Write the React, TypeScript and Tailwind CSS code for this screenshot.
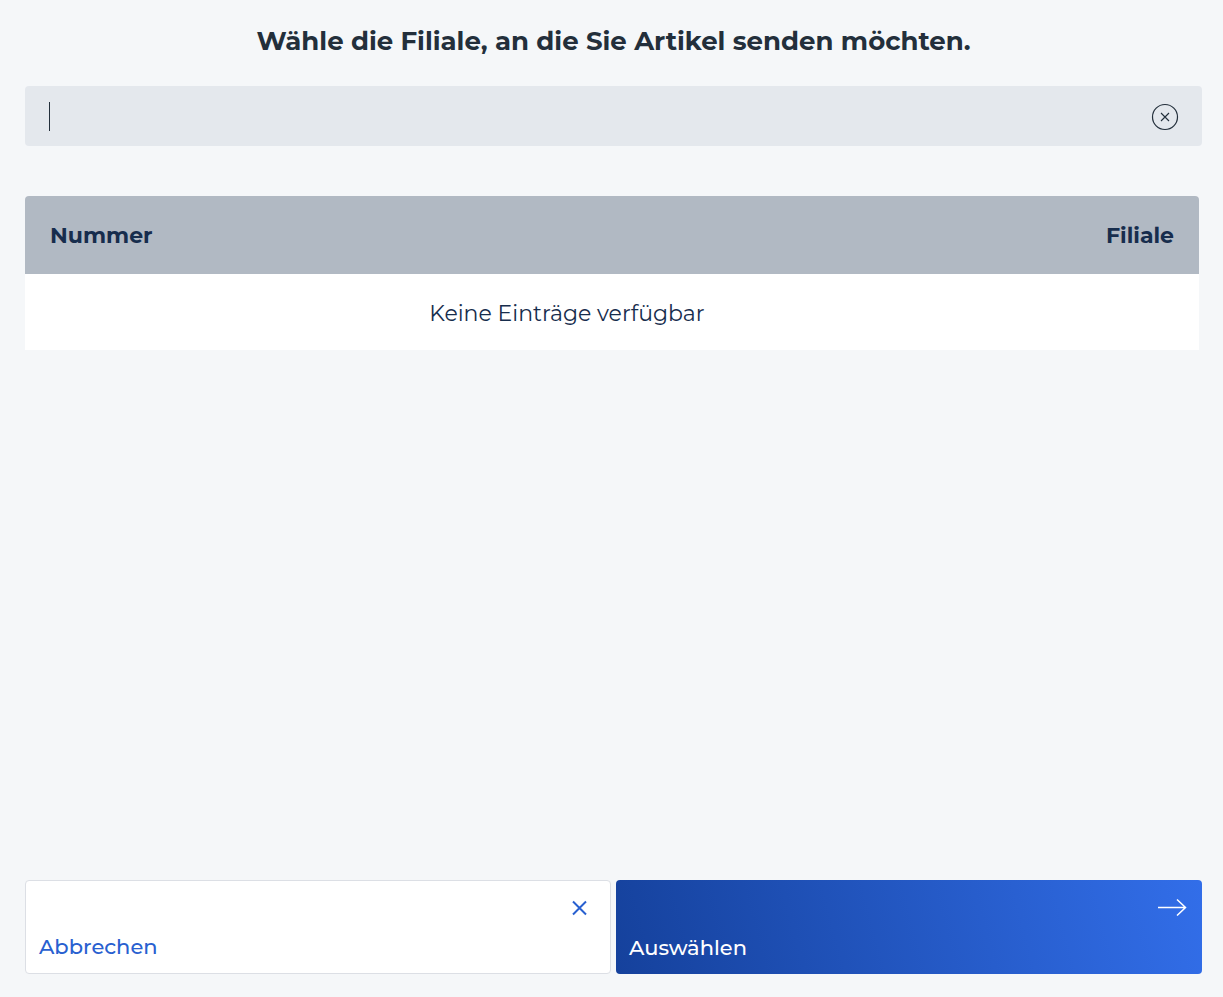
import { useState } from "react";

function ClearIcon() {
  return (
    <svg width="28" height="28" viewBox="0 0 28 28" fill="none" stroke="currentColor" aria-hidden="true">
      <circle cx="14" cy="14" r="12.5" strokeWidth="1.2" />
      <path d="M10 10l8 8M18 10l-8 8" strokeWidth="1.1" />
    </svg>
  );
}

function CloseIcon() {
  return (
    <svg width="16" height="16" viewBox="0 0 16 16" fill="none" stroke="currentColor" strokeWidth="2" aria-hidden="true">
      <path d="M1 1.5l13 13M14 1.5l-13 13" />
    </svg>
  );
}

function ArrowIcon() {
  return (
    <svg width="30" height="18" viewBox="0 0 30 18" fill="none" stroke="currentColor" strokeWidth="1.5" aria-hidden="true">
      <path d="M1 9.5h27.5M20 1.5l8.5 8-8.5 8" />
    </svg>
  );
}

export default function App() {
  const [query, setQuery] = useState("");

  return (
    <div className="flex min-h-screen flex-col bg-[#f5f7f9] pt-[21px] pr-[21px] pb-[23px] pl-[25px] font-['Montserrat','Inter',sans-serif] text-[#232f3b]">
      <h1 className="text-center text-[26px] leading-10 font-bold">
        Wähle die Filiale, an die Sie Artikel senden möchten.
      </h1>

      <div className="mt-[25px] flex h-[60px] items-center rounded bg-[#e4e8ed] pr-[23px] pl-6">
        {query === "" && <span className="h-[29px] w-px bg-[#232f3b]" />}
        <input
          type="text"
          aria-label="Filiale suchen"
          value={query}
          onChange={(e) => setQuery(e.target.value)}
          className="min-w-0 flex-1 bg-transparent text-[22px] outline-none"
        />
        <button type="button" aria-label="Suche löschen" onClick={() => setQuery("")} className="mt-0.5">
          <ClearIcon />
        </button>
      </div>

      <div className="mt-[50px] mr-[3px] overflow-hidden rounded-t">
        <table className="w-full text-[#172d4d]">
          <thead>
            <tr className="h-[78px] bg-[#b1b9c3] text-[22px]">
              <th scope="col" className="pl-[25px] text-left font-bold">Nummer</th>
              <th scope="col" className="pr-[25px] text-right font-bold">Filiale</th>
            </tr>
          </thead>
          <tbody>
            <tr className="h-[76px] bg-white text-[22px]">
              <td colSpan={2} className="pt-0.5 pr-[90px] text-center">Keine Einträge verfügbar</td>
            </tr>
          </tbody>
        </table>
      </div>

      <div className="mt-auto grid grid-cols-2 gap-[5px]">
        <button
          type="button"
          className="flex h-[94px] flex-col items-start justify-between rounded border border-[#dcdfe5] bg-white pt-[19px] pr-[22px] pb-[10px] pl-[13px] text-[#2860d0]"
        >
          <span className="self-end">
            <CloseIcon />
          </span>
          <span className="text-[21px] leading-8 font-medium">Abbrechen</span>
        </button>
        <button
          type="button"
          className="flex h-[94px] flex-col items-start justify-between rounded bg-[linear-gradient(75deg,#15419c,#326ee9)] pt-[18px] pr-[15px] pb-[10px] pl-[13px] text-white"
        >
          <span className="self-end">
            <ArrowIcon />
          </span>
          <span className="text-[21px] leading-8 font-medium">Auswählen</span>
        </button>
      </div>
    </div>
  );
}
